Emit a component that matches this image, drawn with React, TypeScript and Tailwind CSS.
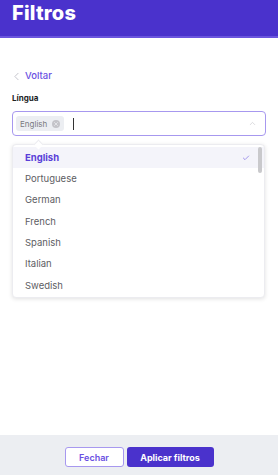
import React from 'react';
import { ChevronLeft, ChevronUp, Check, X } from 'lucide-react';

const languages = ['English', 'Portuguese', 'German', 'French', 'Spanish', 'Italian', 'Swedish'];

export default function App() {
  return (
    <div className="h-[475px] w-[278px] flex flex-col bg-white font-['Inter',sans-serif]">
      <header className="h-[38px] bg-[#4a32cc] border-b-2 border-[#6b55de] px-3 pt-[3px]">
        <h1 className="text-[20px] leading-[20px] font-extrabold text-white tracking-[0.2px]">Filtros</h1>
      </header>

      <main className="flex-1 px-3 pt-[32px]">
        <div className="flex items-center h-[12px] text-[#6a50e2]">
          <ChevronLeft size={13} strokeWidth={1.5} className="text-[#b8b8c0] -ml-[2px]" />
          <span className="ml-[2px] text-[9.5px] font-medium leading-none">Voltar</span>
        </div>

        <div className="mt-[12px] text-[8px] font-bold text-[#222] leading-none">Língua</div>

        <div className="mt-[9px] h-[25px] border border-[#a798ef] rounded-[4px] flex items-center pl-[3px] pr-[8px]">
          <div className="h-[15px] bg-[#eceef2] rounded-[3px] flex items-center pl-[4px] pr-[4px] gap-[5px]">
            <span className="text-[8px] text-[#7a7a80] leading-none">English</span>
            <span className="w-[8px] h-[8px] rounded-full bg-[#c4c4c9] flex items-center justify-center">
              <X size={6} strokeWidth={3} className="text-[#eceef2]" />
            </span>
          </div>
          <span className="ml-[9px] w-px h-[12px] bg-[#333]"></span>
          <div className="flex-1"></div>
          <ChevronUp size={9} strokeWidth={1.6} className="text-[#c4c4ca]" />
        </div>

        <div className="relative mt-[8px] w-[253px] h-[154px] bg-white border border-[#ececf0] rounded-[4px] shadow-[0_1px_4px_rgba(0,0,0,0.12)] pt-[2px]">
          <span className="absolute -top-[4px] left-[22px] w-[7px] h-[7px] rotate-45 bg-white border-l border-t border-[#ececf0]"></span>
          <span className="absolute top-[2px] right-[2px] w-[4px] h-[26px] rounded-full bg-[#c9c9cc]"></span>
          {languages.map((lang, i) => (
            <div
              key={lang}
              className={
                i === 0
                  ? 'h-[21.3px] flex items-center pl-[12px] pr-[14px] bg-[#f4f4fa]'
                  : 'h-[21.3px] flex items-center pl-[12px] pr-[14px]'
              }
            >
              <span
                className={
                  i === 0
                    ? 'flex-1 text-[9.5px] font-bold text-[#5a3fd8] leading-none'
                    : 'flex-1 text-[9.5px] text-[#5d5d63] leading-none'
                }
              >
                {lang}
              </span>
              {i === 0 && <Check size={8} strokeWidth={2} className="text-[#7a66e4]" />}
            </div>
          ))}
        </div>
      </main>

      <footer className="h-[40px] bg-[#eceef2] flex justify-center gap-[3px] pt-[12px]">
        <button className="w-[59px] h-[20px] bg-white border border-[#a798ef] rounded-[3px] text-[9px] font-semibold text-[#6a50e2] leading-none">
          Fechar
        </button>
        <button className="w-[87px] h-[20px] bg-[#4a32cc] rounded-[3px] text-[9px] font-bold text-white leading-none">
          Aplicar filtros
        </button>
      </footer>
    </div>
  );
}
